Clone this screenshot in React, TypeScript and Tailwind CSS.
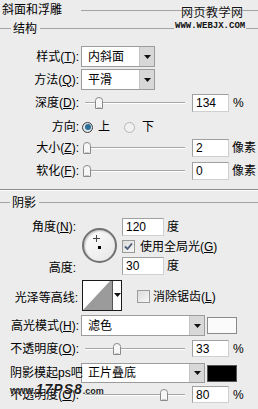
import React from "react";

// Photoshop "斜面和浮雕" layer style panel

function U({ children }: { children: React.ReactNode }) {
  return <span className="underline underline-offset-1">{children}</span>;
}

function Tri() {
  return (
    <svg width="7" height="4" viewBox="0 0 7 4">
      <path d="M0 0 H7 L3.5 4 Z" fill="#111" />
    </svg>
  );
}

function Select({ value, wide }: { value: string; wide?: boolean }) {
  return (
    <div
      className={
        wide
          ? "flex h-full w-[124px] border border-[#9c9c9c] bg-white"
          : "flex h-full w-[74px] border border-[#9c9c9c] bg-white"
      }
    >
      <div className="flex flex-1 items-center pl-[6px] whitespace-nowrap">{value}</div>
      <div className="flex w-[15px] items-center justify-center border-l border-[#c4c4c4] bg-[#d8d8d8]">
        <Tri />
      </div>
    </div>
  );
}

function Field({ value }: { value: string }) {
  return (
    <div className="flex h-full w-[37px] items-center border border-[#a0a0a0] border-b-[#d0d0d0] border-r-[#d0d0d0] bg-white pl-[3px]">
      {value}
    </div>
  );
}

function Thumb() {
  return (
    <svg width="8" height="12" viewBox="0 0 8 12">
      <path d="M0.5 11.5 V3.5 Q0.5 0.5 4 0.5 Q7.5 0.5 7.5 3.5 V11.5 Z" fill="#f6f6f6" stroke="#8a8a8a" />
      <path d="M2 10.5 H6" stroke="#c8c8c8" />
    </svg>
  );
}

function Slider({ pos }: { pos: string }) {
  return (
    <div className="relative ml-[6px] h-full w-[100px]">
      <div className="absolute left-0 right-0 top-[8px] border-t border-b border-t-[#a6a6a6] border-b-white" />
      <div className={"absolute top-1/2 -translate-y-1/2 " + pos}>
        <Thumb />
      </div>
    </div>
  );
}

function Label({ children }: { children: React.ReactNode }) {
  return <div className="w-[79px] shrink-0 text-right whitespace-nowrap">{children}</div>;
}

function Radio({ on }: { on?: boolean }) {
  return on ? (
    <div className="flex h-[11px] w-[11px] items-center justify-center rounded-full border border-[#3a3a3a] bg-[#dfe6ea]">
      <div className="h-[6px] w-[6px] rounded-full bg-[#2f6f97]" />
    </div>
  ) : (
    <div className="h-[11px] w-[11px] rounded-full border border-[#b5b5b5] bg-[#f1f1f1]" />
  );
}

function Check({ on }: { on?: boolean }) {
  return (
    <div className="flex h-[13px] w-[13px] items-center justify-center border border-[#9a9a9a] bg-gradient-to-br from-[#dcdcdc] to-[#f7f7f7]">
      {on && (
        <svg width="9" height="9" viewBox="0 0 9 9">
          <path d="M1 4.5 L3.5 7 L8 1.5" fill="none" stroke="#4a5a7a" strokeWidth="1.8" />
        </svg>
      )}
    </div>
  );
}

export default function App() {
  return (
    <div className="relative flex h-[409px] w-[258px] flex-col overflow-hidden bg-[#ececec] font-['Liberation_Sans','Noto_Sans_CJK_SC',sans-serif] text-[12px] leading-[12px] text-black">
      {/* title */}
      <div className="flex h-[20px] items-center pl-[2px]">
        <span>斜面和浮雕</span>
        <div className="ml-[19px] flex-1 border-t border-[#a4a4a4]" />
      </div>

      {/* 结构 */}
      <div className="flex h-[17px] items-center">
        <div className="w-[11px] border-t border-[#a4a4a4]" />
        <span className="ml-[2px]">结构</span>
        <div className="ml-[3px] flex-1 border-t border-[#a4a4a4]" />
      </div>

      <div className="mt-[9px] flex h-[21px] items-center">
        <Label>
          样式(<U>T</U>):
        </Label>
        <div className="ml-[2px] h-full">
          <Select value="内斜面" />
        </div>
      </div>
      <div className="mt-[2px] flex h-[21px] items-center">
        <Label>
          方法(<U>Q</U>):
        </Label>
        <div className="ml-[2px] h-full">
          <Select value="平滑" />
        </div>
      </div>

      <div className="mt-[4px] flex h-[18px] items-center">
        <Label>
          深度(<U>D</U>):
        </Label>
        <Slider pos="left-[10px]" />
        <div className="ml-[7px] h-full">
          <Field value="134" />
        </div>
        <span className="ml-[4px]">%</span>
      </div>

      <div className="mt-[6px] flex h-[18px] items-center">
        <Label>方向:</Label>
        <div className="ml-[3px]">
          <Radio on />
        </div>
        <span className="ml-[5px]">上</span>
        <div className="ml-[14px]">
          <Radio />
        </div>
        <span className="ml-[7px]">下</span>
      </div>

      <div className="mt-[3px] flex h-[18px] items-center">
        <Label>
          大小(<U>Z</U>):
        </Label>
        <Slider pos="left-[-2px]" />
        <div className="ml-[7px] h-full">
          <Field value="2" />
        </div>
        <span className="ml-[3px]">像素</span>
      </div>
      <div className="mt-[5px] flex h-[18px] items-center">
        <Label>
          软化(<U>F</U>):
        </Label>
        <Slider pos="left-[-2px]" />
        <div className="ml-[7px] h-full">
          <Field value="0" />
        </div>
        <span className="ml-[3px]">像素</span>
      </div>

      <div className="mt-[9px] border-t border-b border-t-[#8e8e8e] border-b-[#fafafa]" />

      {/* 阴影 */}
      <div className="mt-[3px] flex h-[17px] items-center">
        <div className="w-[10px] border-t border-[#a4a4a4]" />
        <span className="ml-[2px]">阴影</span>
        <div className="ml-[3px] flex-1 border-t border-[#a4a4a4]" />
      </div>

      <div className="mt-[7px] grid grid-cols-[76px_46px_1fr] grid-rows-[18px_21px_18px]">
        <div className="col-start-1 row-start-1 flex items-center justify-end whitespace-nowrap">
          角度(<U>N</U>):
        </div>
        <div className="col-start-1 row-start-3 flex items-center justify-end pt-[4px]">高度:</div>
        <div className="col-start-2 row-span-3 row-start-1 pl-[6px] pt-[10px]">
          <div className="relative h-[35px] w-[35px] rounded-full border-2 border-[#727272] bg-gradient-to-br from-[#ffffff] to-[#e6e6e6] shadow-[inset_1px_1px_2px_rgba(0,0,0,0.25)]">
            <svg className="absolute left-[9px] top-[5px]" width="7" height="7" viewBox="0 0 7 7">
              <path d="M3.5 0 V7 M0 3.5 H7" stroke="#444" strokeWidth="1" />
            </svg>
            <div className="absolute left-[14px] top-[16px] h-[3px] w-[3px] bg-black" />
          </div>
        </div>
        <div className="col-start-3 row-start-1 flex items-center">
          <div className="h-full w-[42px]">
            <div className="flex h-full w-[42px] items-center border border-[#a0a0a0] border-b-[#d0d0d0] border-r-[#d0d0d0] bg-white pl-[3px]">
              120
            </div>
          </div>
          <span className="ml-[3px]">度</span>
        </div>
        <div className="col-start-3 row-start-2 flex items-center">
          <Check on />
          <span className="ml-[5px] whitespace-nowrap">
            使用全局光(<U>G</U>)
          </span>
        </div>
        <div className="col-start-3 row-start-3 flex items-center">
          <div className="flex h-full w-[42px] items-center border border-[#a0a0a0] border-b-[#d0d0d0] border-r-[#d0d0d0] bg-white pl-[3px]">
            30
          </div>
          <span className="ml-[3px]">度</span>
        </div>
      </div>

      {/* contour */}
      <div className="mt-[5px] flex h-[31px] items-center">
        <div className="w-[78px] shrink-0 pt-[5px] text-right whitespace-nowrap">光泽等高线:</div>
        <div className="ml-[4px] flex h-full w-[40px] border border-[#1a1a1a] bg-white">
          <svg width="29" height="29" viewBox="0 0 29 29" className="shrink-0">
            <path d="M0 29 L27 0 H29 V29 Z" fill="#9b9b9b" />
          </svg>
          <div className="flex flex-1 items-start justify-center border-l border-[#555] pt-[12px]">
            <Tri />
          </div>
        </div>
        <div className="ml-[15px] mt-[2px]">
          <Check />
        </div>
        <span className="ml-[3px] mt-[2px] whitespace-nowrap">
          消除锯齿(<U>L</U>)
        </span>
      </div>

      <div className="mt-[4px] flex h-[21px] items-center">
        <Label>
          高光模式(<U>H</U>):
        </Label>
        <div className="ml-[2px] h-full">
          <Select value="滤色" wide />
        </div>
        <div className="ml-[2px] h-[17px] w-[30px] border border-[#8a8a8a] bg-[#fbfbfb]" />
      </div>

      <div className="mt-[4px] flex h-[17px] items-center">
        <Label>
          不透明度(<U>O</U>):
        </Label>
        <Slider pos="left-[28px]" />
        <div className="ml-[7px] h-full">
          <Field value="33" />
        </div>
        <span className="ml-[4px]">%</span>
      </div>

      <div className="mt-[6px] flex h-[20px] items-center">
        <div className="relative z-10 w-[79px] shrink-0 pl-[10px] whitespace-nowrap">阴影模起ps吧</div>
        <div className="ml-[2px] h-full">
          <Select value="正片叠底" wide />
        </div>
        <div className="ml-[2px] h-[17px] w-[30px] border border-[#555] bg-black" />
      </div>

      <div className="mt-[3px] flex h-[17px] items-center">
        <Label>
          不透明度(<U>O</U>):
        </Label>
        <Slider pos="left-[75px]" />
        <div className="ml-[7px] h-full">
          <Field value="80" />
        </div>
        <span className="ml-[4px]">%</span>
      </div>

      {/* watermarks */}
      <div className="absolute left-[181px] top-[6px] text-[12px] leading-[14px] tracking-[0.5px] text-[#111] [text-shadow:0_0_2px_#fff]">
        网页教学网
      </div>
      <div className="absolute left-[174px] top-[22px] bg-[#ececec] px-[1px] font-['Liberation_Mono',monospace] text-[9px] leading-[9px] font-bold text-[#111]">
        WWW.WEBJX.COM
      </div>
      <div className="absolute left-[10px] top-[383px] flex items-baseline font-['Liberation_Sans',sans-serif] font-black text-[#1c1c1c] [text-shadow:0_0_1px_#fff]">
        <span className="text-[10px]">www.</span>
        <span className="text-[14px] italic tracking-[1px]">17PS8</span>
        <span className="text-[9px]">.com</span>
      </div>
    </div>
  );
}
